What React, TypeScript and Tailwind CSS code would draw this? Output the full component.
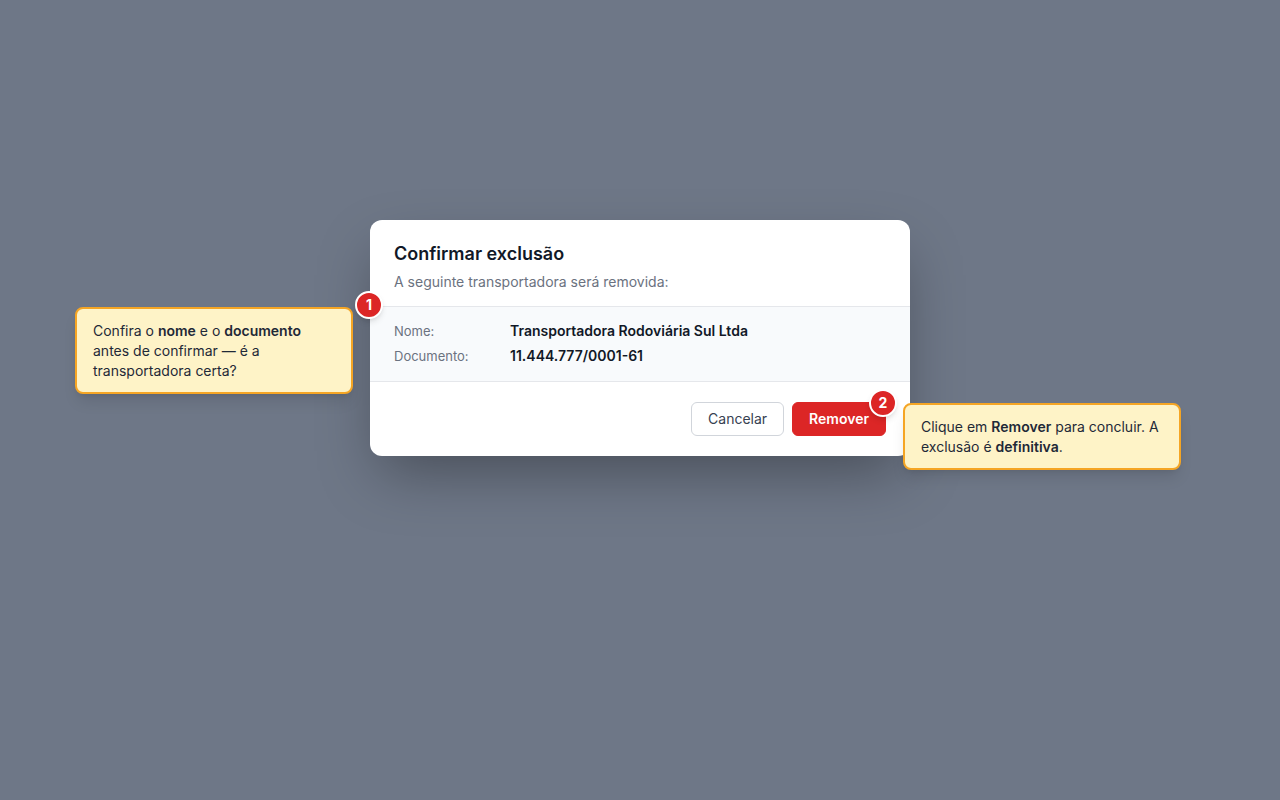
export default function App() {
  return (
    <div
      className="min-h-screen w-full bg-[#6e7787] flex justify-center pt-[220px]"
      style={{fontFamily: 'Inter, "Noto Sans", sans-serif'}}
    >
      <div className="relative w-[540px] h-fit rounded-xl bg-white shadow-[0_25px_60px_-10px_rgba(0,0,0,0.35)]">
        <div className="px-6 pt-5 pb-[14px]">
          <h2 className="text-lg leading-7 font-semibold text-[#111827]">Confirmar exclusão</h2>
          <p className="mt-1 text-sm leading-5 text-[#6b7280]">A seguinte transportadora será removida:</p>
        </div>

        <div className="border-y border-[#e5e7eb] bg-[#f8fafc] px-6 pt-[14px] pb-[15px] flex flex-col gap-[5px]">
          <div className="flex items-center leading-5">
            <span className="w-[116px] text-[13px] text-[#6b7280]">Nome:</span>
            <span className="text-sm font-semibold text-[#111827]">Transportadora Rodoviária Sul Ltda</span>
          </div>
          <div className="flex items-center leading-5">
            <span className="w-[116px] text-[13px] text-[#6b7280]">Documento:</span>
            <span className="text-sm font-semibold text-[#111827]">11.444.777/0001-61</span>
          </div>
        </div>

        <div className="flex justify-end gap-2 px-6 py-5">
          <button className="rounded-md border border-[#d1d5db] bg-white px-4 py-[6px] text-sm leading-5 text-[#374151]">
            Cancelar
          </button>
          <button className="rounded-md border border-[#dc2626] bg-[#dc2626] px-4 py-[6px] text-sm leading-5 font-semibold text-white">
            Remover
          </button>
        </div>

        {/* annotation 1 */}
        <div className="absolute right-full mr-[17px] top-[87px] w-[278px] rounded-lg border-2 border-[#f5a524] bg-[#fef3c7] px-4 pt-3 pb-[11px] text-sm leading-5 text-[#1f2937] shadow-lg">
          Confira o <b className="font-semibold">nome</b> e o <b className="font-semibold">documento</b> antes de confirmar — é a transportadora certa?
        </div>
        <div className="absolute left-[-15px] top-[71px] flex h-[28px] w-[28px] items-center justify-center rounded-full border-2 border-white bg-[#dc2626] text-sm font-bold text-white shadow-md">
          1
        </div>

        {/* annotation 2 */}
        <div className="absolute left-[533px] top-[183px] w-[278px] rounded-lg border-2 border-[#f5a524] bg-[#fef3c7] px-4 pt-3 pb-[11px] text-sm leading-5 text-[#1f2937] shadow-lg">
          Clique em <b className="font-semibold">Remover</b> para concluir. A exclusão é <b className="font-semibold">definitiva</b>.
        </div>
        <div className="absolute left-[499px] top-[169px] flex h-[28px] w-[28px] items-center justify-center rounded-full border-2 border-white bg-[#dc2626] text-sm font-bold text-white shadow-md">
          2
        </div>
      </div>
    </div>
  )
}
